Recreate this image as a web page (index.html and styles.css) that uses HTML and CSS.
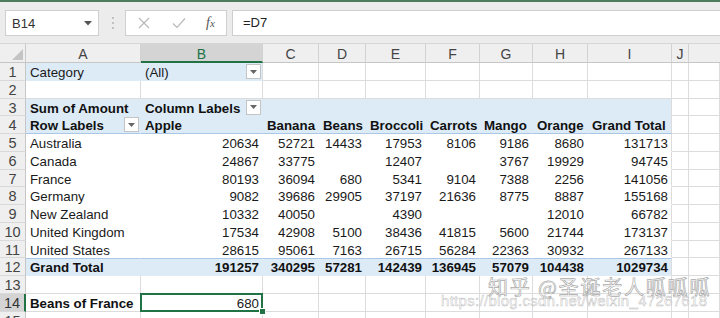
FILE: index.html
```html
<!DOCTYPE html>
<html>
<head>
<meta charset="utf-8">
<link rel="stylesheet" href="styles.css">
</head>
<body>
<div class="app">
  <div class="topline"></div>
  <div class="fbar">
    <div class="namebox"><span>B14</span><svg class="nb-arrow" width="8" height="5" viewBox="0 0 8 5"><path d="M0 0h8L4 4.5z" fill="#555"/></svg></div>
    <svg class="grip" width="4" height="16" viewBox="0 0 4 16"><circle cx="2" cy="3" r="1" fill="#b5b5b5"/><circle cx="2" cy="8" r="1" fill="#b5b5b5"/><circle cx="2" cy="13" r="1" fill="#b5b5b5"/></svg>
    <div class="fbtns">
      <svg width="12" height="12" viewBox="0 0 12 12"><path d="M1 1L11 11M11 1L1 11" stroke="#b9b9b9" stroke-width="1.2" fill="none"/></svg>
      <svg width="14" height="12" viewBox="0 0 14 12"><path d="M1 6.5L5 10.5L13 1.5" stroke="#b9b9b9" stroke-width="1.2" fill="none"/></svg>
      <span class="fx"><i>f</i><span class="fxx">x</span></span>
    </div>
    <div class="finput">=D7</div>
  </div>

  <div class="sheet">
    <div class="corner"><svg width="11" height="11" viewBox="0 0 11 11"><path d="M11 0V11H0z" fill="#c4c4c4"/></svg></div>
    <div class="ch">A</div><div class="ch sel">B</div><div class="ch">C</div><div class="ch">D</div><div class="ch">E</div><div class="ch">F</div><div class="ch">G</div><div class="ch">H</div><div class="ch">I</div><div class="ch">J</div><div class="ch last"></div>

    <div class="rh">1</div>
    <div class="c bl">Category</div><div class="c bl g">(All)<span class="dd"><svg width="7" height="4" viewBox="0 0 7 4"><path d="M0 0h7L3.5 4z" fill="#666"/></svg></span></div>
    <div class="c"></div><div class="c"></div><div class="c"></div><div class="c"></div><div class="c"></div><div class="c"></div><div class="c"></div><div class="c"></div><div class="c"></div>

    <div class="rh">2</div>
    <div class="c"></div><div class="c"></div><div class="c"></div><div class="c"></div><div class="c"></div><div class="c"></div><div class="c"></div><div class="c"></div><div class="c"></div><div class="c"></div><div class="c"></div>

    <div class="rh">3</div>
    <div class="c bl b">Sum of Amount</div><div class="c bl b">Column Labels<span class="dd"><svg width="7" height="4" viewBox="0 0 7 4"><path d="M0 0h7L3.5 4z" fill="#666"/></svg></span></div>
    <div class="c bl"></div><div class="c bl"></div><div class="c bl"></div><div class="c bl"></div><div class="c bl"></div><div class="c bl"></div><div class="c bl g"></div>
    <div class="c"></div><div class="c"></div>

    <div class="rh">4</div>
    <div class="c bl b hb">Row Labels<span class="dd"><svg width="7" height="4" viewBox="0 0 7 4"><path d="M0 0h7L3.5 4z" fill="#666"/></svg></span></div>
    <div class="c bl b hb">Apple</div><div class="c bl b hb">Banana</div><div class="c bl b hb">Beans</div><div class="c bl b hb">Broccoli</div><div class="c bl b hb">Carrots</div><div class="c bl b hb">Mango</div><div class="c bl b hb">Orange</div><div class="c bl b hb g">Grand Total</div>
    <div class="c"></div><div class="c"></div>

    <div class="rh">5</div>
    <div class="c pv">Australia</div><div class="c pv n">20634</div><div class="c pv n">52721</div><div class="c pv n">14433</div><div class="c pv n">17953</div><div class="c pv n">8106</div><div class="c pv n">9186</div><div class="c pv n">8680</div><div class="c pv n g">131713</div>
    <div class="c"></div><div class="c"></div>

    <div class="rh">6</div>
    <div class="c pv">Canada</div><div class="c pv n">24867</div><div class="c pv n">33775</div><div class="c pv n"></div><div class="c pv n">12407</div><div class="c pv n"></div><div class="c pv n">3767</div><div class="c pv n">19929</div><div class="c pv n g">94745</div>
    <div class="c"></div><div class="c"></div>

    <div class="rh">7</div>
    <div class="c pv">France</div><div class="c pv n">80193</div><div class="c pv n">36094</div><div class="c pv n">680</div><div class="c pv n">5341</div><div class="c pv n">9104</div><div class="c pv n">7388</div><div class="c pv n">2256</div><div class="c pv n g">141056</div>
    <div class="c"></div><div class="c"></div>

    <div class="rh">8</div>
    <div class="c pv">Germany</div><div class="c pv n">9082</div><div class="c pv n">39686</div><div class="c pv n">29905</div><div class="c pv n">37197</div><div class="c pv n">21636</div><div class="c pv n">8775</div><div class="c pv n">8887</div><div class="c pv n g">155168</div>
    <div class="c"></div><div class="c"></div>

    <div class="rh">9</div>
    <div class="c pv">New Zealand</div><div class="c pv n">10332</div><div class="c pv n">40050</div><div class="c pv n"></div><div class="c pv n">4390</div><div class="c pv n"></div><div class="c pv n"></div><div class="c pv n">12010</div><div class="c pv n g">66782</div>
    <div class="c"></div><div class="c"></div>

    <div class="rh">10</div>
    <div class="c pv">United Kingdom</div><div class="c pv n">17534</div><div class="c pv n">42908</div><div class="c pv n">5100</div><div class="c pv n">38436</div><div class="c pv n">41815</div><div class="c pv n">5600</div><div class="c pv n">21744</div><div class="c pv n g">173137</div>
    <div class="c"></div><div class="c"></div>

    <div class="rh">11</div>
    <div class="c pv">United States</div><div class="c pv n">28615</div><div class="c pv n">95061</div><div class="c pv n">7163</div><div class="c pv n">26715</div><div class="c pv n">56284</div><div class="c pv n">22363</div><div class="c pv n">30932</div><div class="c pv n g">267133</div>
    <div class="c"></div><div class="c"></div>

    <div class="rh">12</div>
    <div class="c bl b tt">Grand Total</div><div class="c bl b n tt">191257</div><div class="c bl b n tt">340295</div><div class="c bl b n tt">57281</div><div class="c bl b n tt">142439</div><div class="c bl b n tt">136945</div><div class="c bl b n tt">57079</div><div class="c bl b n tt">104438</div><div class="c bl b n tt g">1029734</div>
    <div class="c"></div><div class="c"></div>

    <div class="rh">13</div>
    <div class="c"></div><div class="c"></div><div class="c"></div><div class="c"></div><div class="c"></div><div class="c"></div><div class="c"></div><div class="c"></div><div class="c"></div><div class="c"></div><div class="c"></div>

    <div class="rh sel">14</div>
    <div class="c b">Beans of France</div><div class="c n sel">680</div>
    <div class="c"></div><div class="c"></div><div class="c"></div><div class="c"></div><div class="c"></div><div class="c"></div><div class="c"></div><div class="c"></div><div class="c"></div>

    <div class="rh">15</div>
    <div class="c"></div><div class="c"></div><div class="c"></div><div class="c"></div><div class="c"></div><div class="c"></div><div class="c"></div><div class="c"></div><div class="c"></div><div class="c"></div><div class="c"></div>
  </div>

  <div class="wm1">知乎 @圣诞老人呱呱呱</div>
  <div class="wm2">https://blog.csdn.net/weixin_47267618</div>
</div>
</body>
</html>
```

FILE: styles.css
```css
body {
  margin: 0;
  background: #ffffff;
  font-family: "Liberation Sans", Arial, sans-serif;
  color: #1a1a1a;
}

.app {
  position: relative;
  width: 720px;
  height: 318px;
  overflow: hidden;
}

.topline {
  height: 2px;
  background: #4f7b5f;
}

.fbar {
  height: 42px;
  box-sizing: border-box;
  background: #ececec;
  border-bottom: 1px solid #d6d6d6;
  display: flex;
  align-items: flex-start;
  padding-top: 8px;
}

.namebox {
  margin-left: 5px;
  width: 94px;
  height: 26px;
  box-sizing: border-box;
  background: #fff;
  border: 1px solid #cfcfcf;
  display: flex;
  align-items: center;
  justify-content: space-between;
  padding: 0 6px 0 6px;
  font-size: 13px;
  color: #333;
}

.grip {
  margin: 5px 0 0 12px;
}

.fbtns {
  margin-left: 10px;
  width: 102px;
  height: 26px;
  box-sizing: border-box;
  background: #fff;
  border: 1px solid #cfcfcf;
  display: flex;
  align-items: center;
  padding-left: 12px;
  gap: 22px;
}

.fx {
  font-family: "Liberation Serif", serif;
  font-size: 14px;
  color: #555;
  margin-left: -2px;
}

.fxx {
  font-style: italic;
  font-size: 11px;
}

.finput {
  margin-left: 5px;
  flex: 1;
  height: 26px;
  box-sizing: border-box;
  background: #fff;
  border: 1px solid #cfcfcf;
  border-right: none;
  font-size: 13px;
  color: #222;
  line-height: 24px;
  padding-left: 10px;
}

.sheet {
  display: grid;
  grid-template-columns: 26px 115px 122px 56px 47px 60px 54px 53px 55px 84px 17px 31px;
  grid-template-rows: 19px repeat(15, 17.77px);
}

.corner {
  background: #efefef;
  border-right: 1px solid #c9c9c9;
  border-bottom: 1px solid #c6c6c6;
  box-sizing: border-box;
  display: flex;
  align-items: flex-end;
  justify-content: flex-end;
  padding: 0 2px 2px 0;
}

.ch {
  box-sizing: border-box;
  background: #efefef;
  border-right: 1px solid #d2d2d2;
  border-bottom: 1px solid #c6c6c6;
  text-align: center;
  font-size: 14px;
  line-height: 19px;
  padding-top: 1px;
  color: #444;
}

.ch.sel {
  background: #d4d4d4;
  border-bottom: 2px solid #217346;
  color: #217346;
}

.ch.last {
  border-right: none;
}

.rh {
  box-sizing: border-box;
  background: #efefef;
  border-right: 1px solid #c6c6c6;
  border-bottom: 1px solid #d9d9d9;
  text-align: center;
  font-size: 14.5px;
  line-height: 17px;
  padding-top: 1px;
  color: #444;
}

.rh.sel {
  background: #d4d4d4;
  border-right: 2px solid #217346;
  color: #333;
}

.c {
  position: relative;
  box-sizing: border-box;
  border-right: 1px solid #dcdcdc;
  border-bottom: 1px solid #dcdcdc;
  font-size: 13.3px;
  line-height: 16px;
  padding: 2px 3px 0 4px;
  white-space: nowrap;
  color: #1a1a1a;
}

.n {
  text-align: right;
}

.b {
  font-weight: bold;
  color: #111;
}

.pv {
  border-color: transparent;
}

.bl {
  background: #ddebf7;
  border-color: transparent;
}

.hb {
  border-bottom-color: #a9c8e8;
}

.tt {
  border-top: 1px solid #a9c8e8;
  padding-top: 1px;
}

.g {
  border-right-color: #dcdcdc;
}

.dd {
  position: absolute;
  right: 1px;
  top: 1px;
  width: 15px;
  height: 15px;
  box-sizing: border-box;
  background: #fff;
  border: 1px solid #c4c4c4;
  display: flex;
  align-items: center;
  justify-content: center;
}

.c.sel::after {
  content: "";
  position: absolute;
  left: -1px;
  top: -1px;
  right: -1px;
  bottom: -1px;
  border: 2px solid #217346;
}

.c.sel::before {
  content: "";
  position: absolute;
  right: -4px;
  bottom: -4px;
  width: 5px;
  height: 5px;
  background: #217346;
  border: 1px solid #fff;
  z-index: 2;
}

.wm1 {
  position: absolute;
  left: 488px;
  top: 276px;
  font-family: "Noto Sans CJK SC", "Noto Sans", sans-serif;
  font-size: 20px;
  line-height: 22px;
  letter-spacing: 1.8px;
  color: rgba(255, 255, 255, 0.8);
  -webkit-text-stroke: 0.7px rgba(140, 140, 140, 0.75);
  white-space: nowrap;
}

.wm2 {
  position: absolute;
  left: 441px;
  top: 292px;
  font-family: "Liberation Sans", Arial, sans-serif;
  font-size: 15px;
  line-height: 17px;
  letter-spacing: 0.3px;
  color: rgba(255, 255, 255, 0.7);
  -webkit-text-stroke: 0.5px rgba(160, 160, 160, 0.7);
  white-space: nowrap;
}
```
